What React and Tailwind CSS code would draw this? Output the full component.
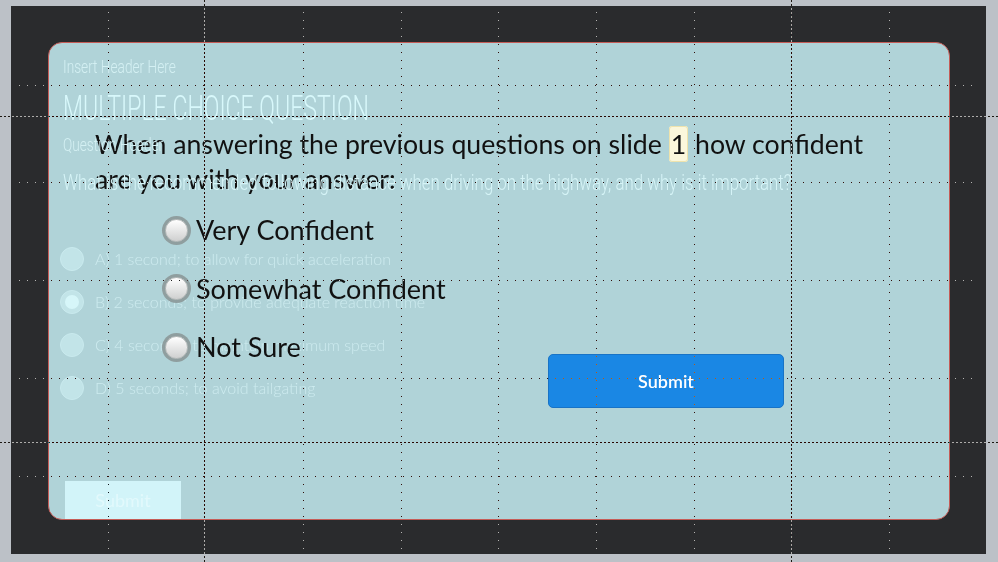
import React from 'react';

const vLines = [
  { x: 108, dashed: false },
  { x: 204, dashed: true },
  { x: 303, dashed: false },
  { x: 401, dashed: false },
  { x: 498, dashed: false },
  { x: 596, dashed: false },
  { x: 694, dashed: false },
  { x: 791, dashed: true },
  { x: 889, dashed: false },
];

const hLines = [
  { y: 85, dashed: false },
  { y: 116, dashed: true },
  { y: 182, dashed: false },
  { y: 280, dashed: false },
  { y: 378, dashed: false },
  { y: 442, dashed: true },
  { y: 476, dashed: false },
];

const oldOptions = [
  { label: 'A) 1 second; to allow for quick acceleration', checked: false },
  { label: 'B) 2 seconds; to provide adequate reaction time', checked: true },
  { label: 'C) 4 seconds; to maintain maximum speed', checked: false },
  { label: 'D) 5 seconds; to avoid tailgating', checked: false },
];

const answers = ['Very Confident', 'Somewhat Confident', 'Not Sure'];

// guide overlay (editor grid drawn over the slide)
function Guides() {
  return (
    <div className="pointer-events-none absolute inset-0 mix-blend-difference">
      {vLines.map(l => (
        <div
          key={'v' + l.x}
          className={l.dashed
            ? 'absolute top-0 h-[562px] w-px bg-[repeating-linear-gradient(180deg,#d8d8d8_0_2px,transparent_2px_4px)]'
            : 'absolute top-[12px] h-[537px] w-px bg-[repeating-linear-gradient(180deg,#e0e0e0_0_1px,transparent_1px_8px)]'}
          style={{ left: l.x }}
        />
      ))}
      {hLines.map(l => (
        <div
          key={'h' + l.y}
          className={l.dashed
            ? 'absolute left-0 w-[998px] h-px bg-[repeating-linear-gradient(90deg,#d8d8d8_0_2px,transparent_2px_4px)]'
            : 'absolute left-[19px] w-[960px] h-px bg-[repeating-linear-gradient(90deg,#e0e0e0_0_1px,transparent_1px_8px)]'}
          style={{ top: l.y }}
        />
      ))}
    </div>
  );
}

function Radio() {
  return (
    <div className="w-[29px] h-[29px] rounded-full bg-[#8f9e9f] p-[3px] shrink-0">
      <div className="w-full h-full rounded-full border border-[#b9bdbd] bg-gradient-to-b from-white to-[#cfd0d0]" />
    </div>
  );
}

export default function App() {
  return (
    <div className="relative w-[998px] h-[562px] bg-[#bcc1c7] pl-[11px] pt-[6px] overflow-hidden font-['Lato',sans-serif]">
      <div className="w-[975px] h-[548px] bg-[#2a2b2d] pl-[37px] pt-[36px]">
        <div className="w-[902px] h-[478px] rounded-[14px] border border-[#c55c57] bg-[#b0d3d8] grid overflow-hidden">

          {/* faded original slide */}
          <div className="col-start-1 row-start-1 pl-[14px] flex flex-col font-['Roboto',sans-serif] font-light">
            <div className="mt-[12px] h-[24px] leading-[24px] text-[18px] text-[#d4f0f3] whitespace-nowrap">
              <span className="inline-block origin-left scale-x-[0.76]">Insert Header Here</span>
            </div>
            <div className="mt-[10px] h-[40px] leading-[40px] text-[35px] text-[#d8f8fb] whitespace-nowrap">
              <span className="inline-block origin-left scale-x-[0.66]">MULTIPLE CHOICE QUESTION</span>
            </div>
            <div className="mt-[4px] h-[24px] leading-[24px] text-[18px] text-[#d4f0f3] whitespace-nowrap">
              <span className="inline-block origin-left scale-x-[0.76]">Question Header</span>
            </div>
            <div className="mt-[13px] h-[26px] leading-[26px] text-[22px] whitespace-nowrap text-[#d6f4f7]">
              <span className="inline-block origin-left scale-x-[0.766]">
                What is the recommended following distance when driving on the highway, and why is it important?
              </span>
            </div>
            <div className="mt-[41px] flex flex-col font-['Lato',sans-serif]">
              {oldOptions.map(o => (
                <div key={o.label} className="h-[43px] flex items-center">
                  <div className="-ml-[3px] w-[24px] h-[24px] rounded-full bg-[#c2e4e8] border border-[#c9eaee] flex items-center justify-center">
                    {o.checked && <div className="w-[14px] h-[14px] rounded-full bg-[#d6f6f9]" />}
                  </div>
                  <span className="ml-[11px] text-[16px] font-light text-[#cdebef]">{o.label}</span>
                </div>
              ))}
            </div>
            <div className="mt-[72px] ml-[2px] w-[116px] h-[38px] bg-[#d2f4f9] flex items-center justify-center text-[18px] font-['Lato',sans-serif] font-normal text-[#e2f9fc]">
              Submit
            </div>
          </div>

          {/* confidence question */}
          <div className="col-start-1 row-start-1 pl-[46px] pt-[84px] flex flex-col">
            <p className="w-[800px] text-[26.7px] leading-[35px] text-[#111]">
              When answering the previous questions on slide{' '}
              <span className="bg-[#fbf7dc] border border-[#eee3ad] rounded-[3px] px-[1px] py-[1px]">1</span>{' '}
              how confident are you with your answer:
            </p>
            <div className="flex mt-[4px]">
              <div className="ml-[67px] w-[320px] flex flex-col">
                {answers.map(a => (
                  <div key={a} className="h-[58.5px] flex items-center gap-[5px]">
                    <Radio />
                    <span className="text-[27px] text-[#111] whitespace-nowrap">{a}</span>
                  </div>
                ))}
              </div>
              <div className="ml-[66px] mt-[153px]">
                <button className="w-[236px] h-[54px] rounded-[5px] bg-[#1a87e4] border border-[#1873c6] text-white text-[18px] font-semibold">
                  Submit
                </button>
              </div>
            </div>
          </div>

        </div>
      </div>
      <Guides />
    </div>
  );
}
